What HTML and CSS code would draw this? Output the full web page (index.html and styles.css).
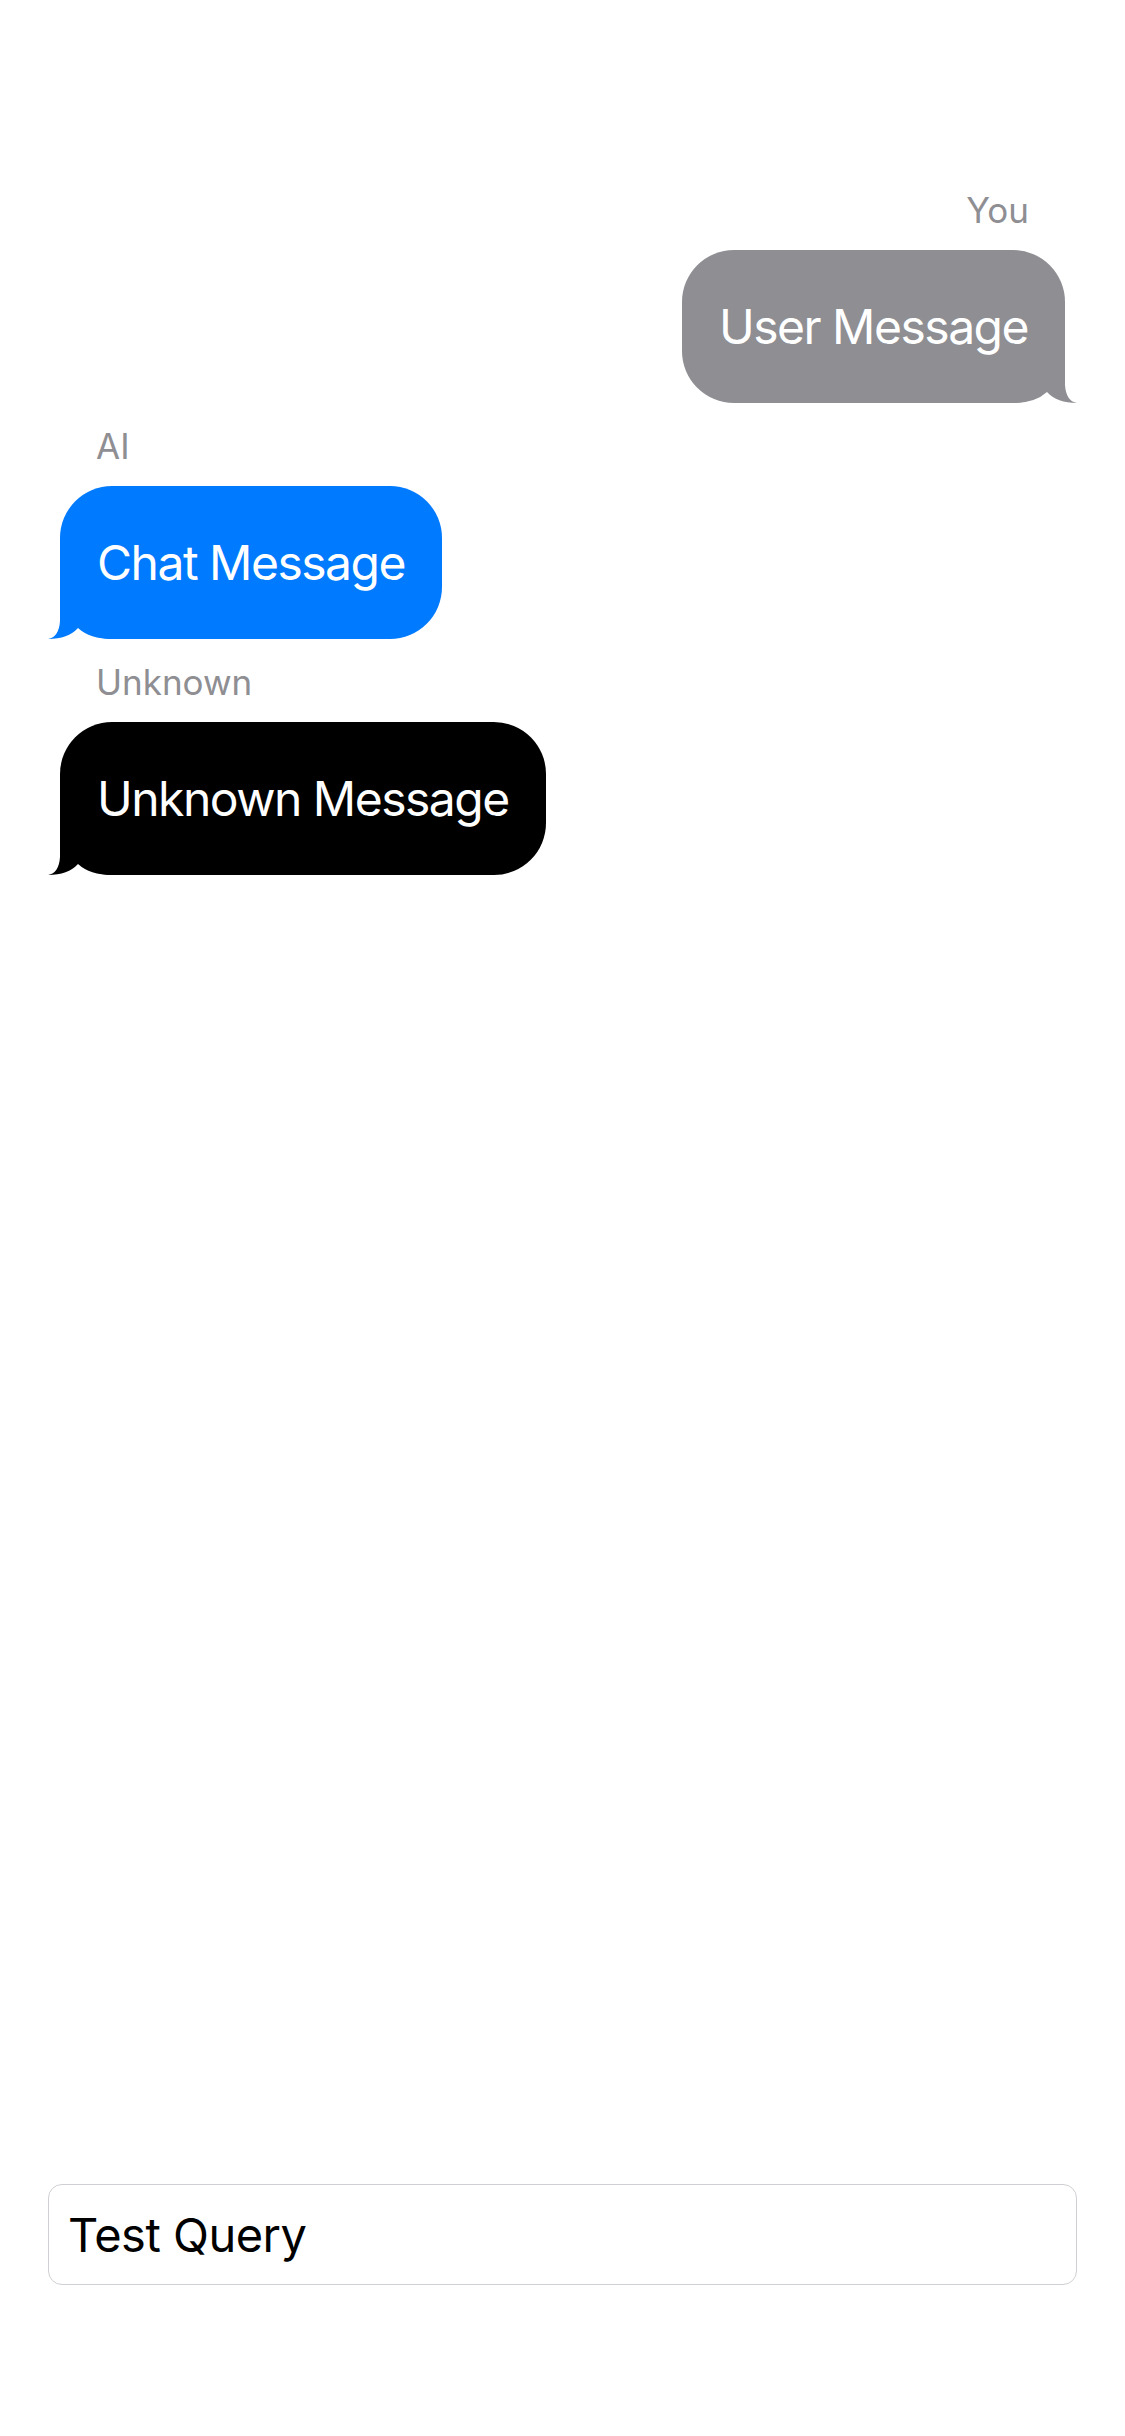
FILE: index.html
```html
<!DOCTYPE html>
<html lang="en">
<head>
<meta charset="utf-8">
<title>Chat</title>
<link rel="stylesheet" href="styles.css">
</head>
<body>
<div class="screen">
  <div class="chat">
    <div class="msg msg-out">
      <div class="sender">You</div>
      <div class="bubble bubble-user">User Message<svg class="tail tail-right" viewBox="0 0 64 53" width="64" height="53"><path d="M0,53 Q22,53 34,42 Q44,53 64,53 Q53,51 52,35 L52,0 L0,0 Z"/></svg></div>
    </div>
    <div class="msg msg-in">
      <div class="sender">AI</div>
      <div class="bubble bubble-ai">Chat Message<svg class="tail tail-left" viewBox="0 0 64 53" width="64" height="53"><path d="M0,53 Q22,53 34,42 Q44,53 64,53 Q53,51 52,35 L52,0 L0,0 Z"/></svg></div>
    </div>
    <div class="msg msg-in">
      <div class="sender">Unknown</div>
      <div class="bubble bubble-unknown">Unknown Message<svg class="tail tail-left" viewBox="0 0 64 53" width="64" height="53"><path d="M0,53 Q22,53 34,42 Q44,53 64,53 Q53,51 52,35 L52,0 L0,0 Z"/></svg></div>
    </div>
  </div>
  <div class="composer">
    <div class="field">Test Query</div>
  </div>
</div>
</body>
</html>
```
FILE: styles.css
```css
html, body {
  margin: 0;
  padding: 0;
  background: #ffffff;
}

body {
  font-family: Inter, "Noto Sans", "Liberation Sans", sans-serif;
}

.screen {
  height: 2436px;
  display: flex;
  flex-direction: column;
}

.chat {
  flex: 1;
  padding-top: 190px;
}

.msg {
  display: flex;
  flex-direction: column;
  gap: 20px;
  margin-bottom: 23px;
  padding: 0 60px;
}

.msg-out {
  align-items: flex-end;
}

.msg-in {
  align-items: flex-start;
}

.sender {
  padding: 0 36px;
  font-size: 35px;
  line-height: 40px;
  color: #8e8e93;
}

.bubble {
  position: relative;
  padding: 48px 37px 47px;
  font-size: 48px;
  line-height: 58px;
  letter-spacing: -1.5px;
  color: #ffffff;
  border-radius: 52px;
  white-space: nowrap;
}

.bubble-user {
  background: #8e8e93;
  fill: #8e8e93;
}

.bubble-ai {
  background: #007aff;
  fill: #007aff;
}

.bubble-unknown {
  background: #000000;
  fill: #000000;
}

.tail {
  position: absolute;
  bottom: 0;
  display: block;
}

.tail-right {
  right: -12px;
}

.tail-left {
  left: -12px;
  transform: scaleX(-1);
}

.composer {
  padding: 0 48px 151px;
}

.field {
  box-sizing: border-box;
  height: 101px;
  border: 1.5px solid #d0d0d4;
  border-radius: 14px;
  padding: 0 19px;
  display: flex;
  align-items: center;
  font-size: 47px;
  letter-spacing: -0.5px;
  color: #000000;
}
```
